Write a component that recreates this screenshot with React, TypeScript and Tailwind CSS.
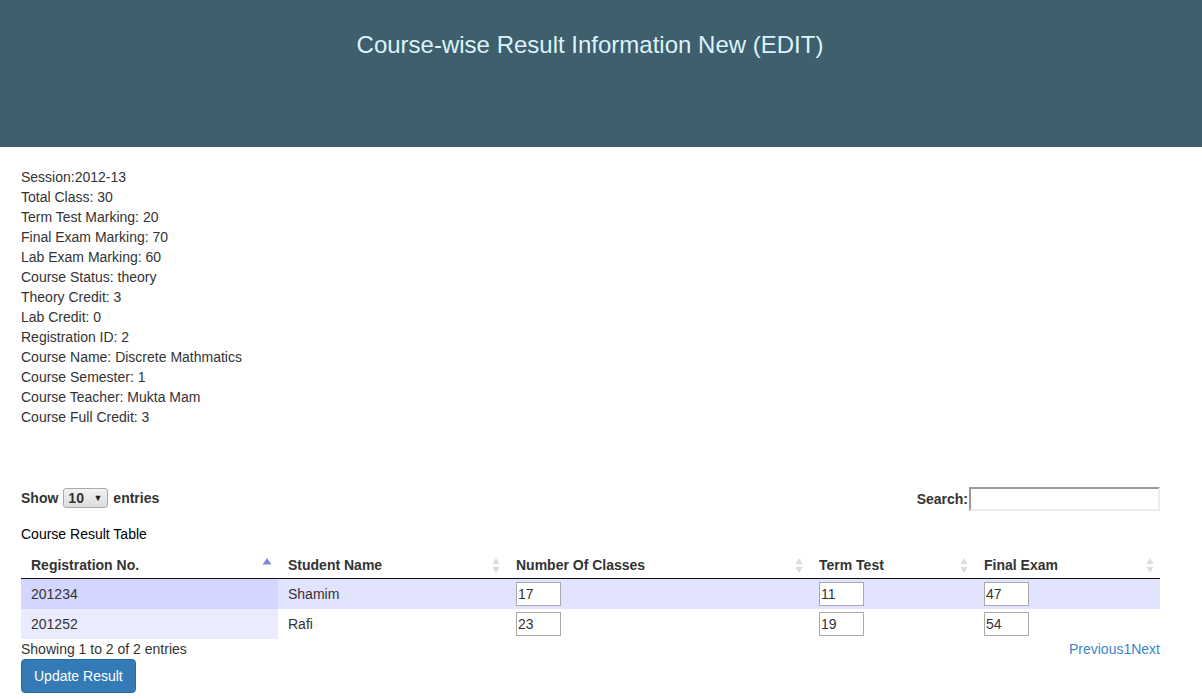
import React from "react";

const info = [
  "Session:2012-13",
  "Total Class: 30",
  "Term Test Marking: 20",
  "Final Exam Marking: 70",
  "Lab Exam Marking: 60",
  "Course Status: theory",
  "Theory Credit: 3",
  "Lab Credit: 0",
  "Registration ID: 2",
  "Course Name: Discrete Mathmatics",
  "Course Semester: 1",
  "Course Teacher: Mukta Mam",
  "Course Full Credit: 3",
];

const rows = [
  { reg: "201234", name: "Shamim", classes: "17", term: "11", final: "47" },
  { reg: "201252", name: "Rafi", classes: "23", term: "19", final: "54" },
];

function SortBoth() {
  return (
    <svg width="8" height="15" viewBox="0 0 8 15" className="shrink-0">
      <path d="M4 0 L7.5 6 L0.5 6 Z" fill="#dcdcdc" />
      <path d="M4 15 L7.5 9 L0.5 9 Z" fill="#dcdcdc" />
    </svg>
  );
}

function SortAsc() {
  return (
    <svg width="10" height="15" viewBox="0 0 10 15" className="shrink-0">
      <path d="M5 0 L9.5 6.5 L0.5 6.5 Z" fill="#8686e0" />
    </svg>
  );
}

function Cell({ value }: { value: string }) {
  return (
    <input
      readOnly
      value={value}
      className="w-[45px] h-[24px] border border-[#a9a9a9] bg-white px-[1px] text-[14px] text-[#333] outline-none font-['Liberation_Sans',Arial,sans-serif]"
    />
  );
}

export default function App() {
  return (
    <div className="min-h-[699px] bg-white font-['Liberation_Sans',Arial,sans-serif] text-[14px] leading-[20px] text-[#333]">
      <header className="h-[147px] bg-[#3e5f6b] flex justify-center pr-[22px]">
        <h1 className="pt-[32px] text-[24px] leading-[26px] font-normal text-[#dcf2fc]">
          Course-wise Result Information New (EDIT)
        </h1>
      </header>

      <main className="pl-[21px] pr-[42px]">
        <div className="pt-[20px]">
          {info.map((l) => (
            <div key={l}>{l}</div>
          ))}
        </div>

        <div className="mt-[59px] flex items-center justify-between h-[24px]">
          <div className="flex items-center gap-[5px] font-bold">
            <span>Show</span>
            <div className="w-[45px] h-[20px] border border-[#aaa] rounded-[3px] bg-gradient-to-b from-[#f2f2f2] to-[#dedede] flex items-center justify-between pl-[4px] pr-[5px]">
              <span className="leading-[18px]">10</span>
              <span className="text-[9px] leading-[18px] text-[#222]">▼</span>
            </div>
            <span>entries</span>
          </div>
          <div className="flex items-center gap-[1px] font-bold pt-[1px]">
            <span>Search:</span>
            <div className="w-[191px] h-[24px] border-2 border-t-[#9a9a9a] border-l-[#9a9a9a] border-r-[#ececec] border-b-[#ececec] bg-white" />
          </div>
        </div>

        <div className="mt-[14px] text-black">Course Result Table</div>

        <table className="table-fixed w-[1139px]">
          <colgroup>
            <col className="w-[257px]" />
            <col className="w-[228px]" />
            <col className="w-[303px]" />
            <col className="w-[165px]" />
            <col className="w-[186px]" />
          </colgroup>
          <thead>
            <tr className="border-b border-[#111]">
              {[
                ["Registration No.", true],
                ["Student Name", false],
                ["Number Of Classes", false],
                ["Term Test", false],
                ["Final Exam", false],
              ].map(([label, asc]) => (
                <th
                  key={label as string}
                  className="pt-[11px] pb-[3px] pl-[10px] pr-[6px] text-left font-bold"
                >
                  <div className="flex items-center justify-between">
                    <span>{label as string}</span>
                    {asc ? <SortAsc /> : <SortBoth />}
                  </div>
                </th>
              ))}
            </tr>
          </thead>
          <tbody>
            {rows.map((r, i) => {
              const odd = i === 0;
              const rowBg = odd ? "bg-[#e2e4ff]" : "bg-white";
              const sortBg = odd ? "bg-[#d3d6ff]" : "bg-[#eaebff]";
              return (
                <tr key={r.reg} className={`h-[30px] ${rowBg}`}>
                  <td className={`pl-[10px] py-[3px] ${sortBg}`}>{r.reg}</td>
                  <td className="pl-[10px] py-[3px]">{r.name}</td>
                  <td className="pl-[10px] py-[3px] align-middle">
                    <div className="flex">
                      <Cell value={r.classes} />
                    </div>
                  </td>
                  <td className="pl-[10px] py-[3px]">
                    <div className="flex">
                      <Cell value={r.term} />
                    </div>
                  </td>
                  <td className="pl-[10px] py-[3px]">
                    <div className="flex">
                      <Cell value={r.final} />
                    </div>
                  </td>
                </tr>
              );
            })}
          </tbody>
        </table>

        <div className="flex justify-between">
          <span>Showing 1 to 2 of 2 entries</span>
          <span className="text-[#3a86c8]">Previous1Next</span>
        </div>

        <button className="border border-[#2e6da4] bg-[#337ab7] text-white rounded-[4px] px-[12px] py-[6px] leading-[20px] text-[14px]">
          Update Result
        </button>
      </main>
    </div>
  );
}
